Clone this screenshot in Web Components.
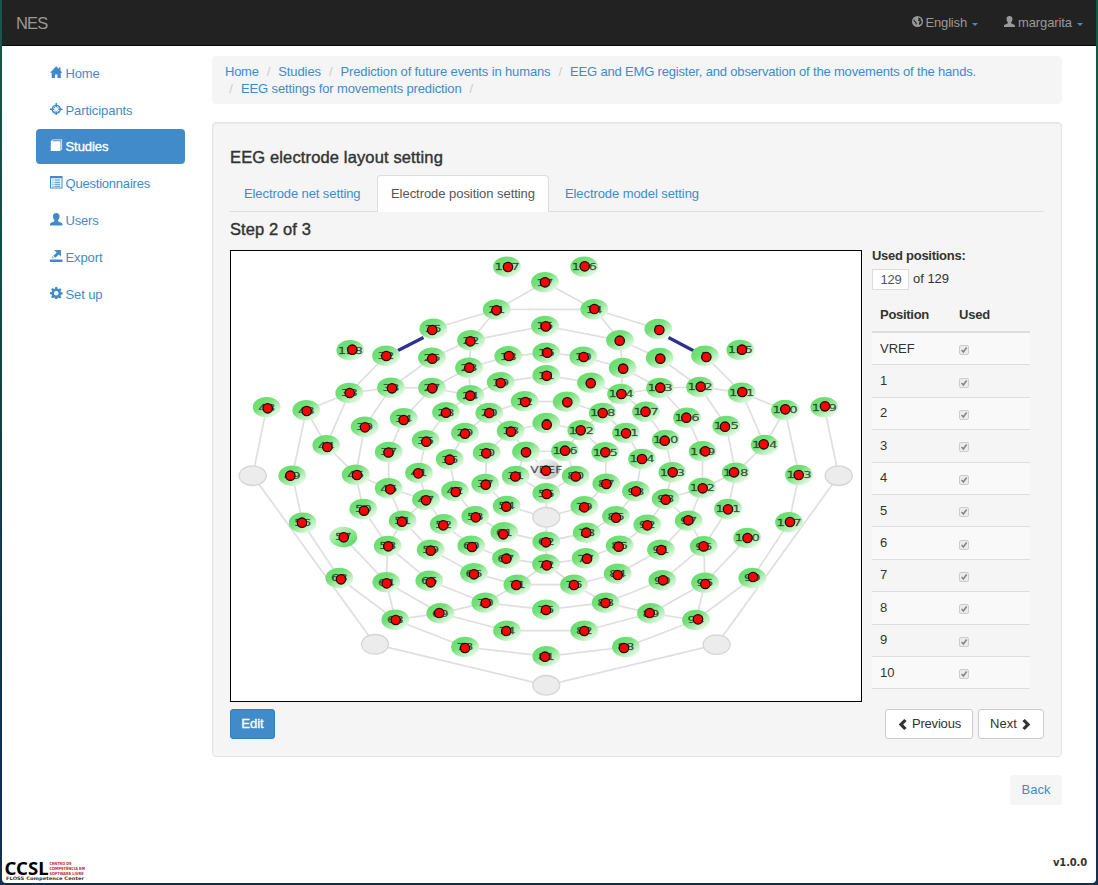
<!DOCTYPE html>
<html lang="en">
<head>
<meta charset="utf-8">
<title>NES</title>
<style>
html,body{margin:0;height:885px;overflow:hidden}
body{font:13px/18px "Liberation Sans",Arial,sans-serif;color:#333;background:linear-gradient(#0d5c46,#0f5544 150px,#123f46 450px,#102f4c 750px,#14304f)}
</style>
</head>
<body>
<nes-app></nes-app>
<script>
class Base extends HTMLElement{
  render(css,html){
    const root=this.attachShadow({mode:'open'});
    root.innerHTML=`<style>*{box-sizing:border-box}:host{display:block;box-sizing:border-box}a{color:#428bca;text-decoration:none}[data-w]{display:inline-block;white-space:nowrap}${css}</style>${html}`;
    root.querySelectorAll('[data-w]').forEach(Base.fit);
  }
  /* tracks a label so that it takes up its declared width */
  static fit(el){
    const r=document.createRange();r.selectNodeContents(el);
    const now=r.getBoundingClientRect().width;
    if(now)el.style.letterSpacing=((+el.dataset.w-now)/el.textContent.length).toFixed(3)+'px';
  }
}
const ICONS={
  home:'<path d="M8 .2 0 8.600h2.200V16h4.300v-5h3v5h4.300V8.600H16l-2.600-2.800V1.500h-2v2.200z"/>',
  screenshot:'<path fill-rule="evenodd" d="M7 0h2v2.100A6 6 0 0 1 13.900 7H16v2h-2.100A6 6 0 0 1 9 13.900V16H7v-2.100A6 6 0 0 1 2.100 9H0V7h2.100A6 6 0 0 1 7 2.100zM7 3.700A4.500 4.500 0 0 0 3.700 7H5.500V9H3.700A4.500 4.500 0 0 0 7 12.300V10.500H9v1.800A4.500 4.500 0 0 0 12.300 9H10.500V7h1.800A4.500 4.500 0 0 0 9 3.700V5.500H7z"/><path d="M4 4l2.500 2.500M12 4 9.500 6.500M4 12l2.500-2.500M12 12 9.500 9.500" stroke="currentColor" stroke-width="1.200"/>',
  book:'<path d="M1 3 3.500 .5H15.500V13.500L14.500 14.500V1.700H4L2.500 3H13.500V15.500H1z"/>',
  list:'<path fill-rule="evenodd" d="M0 0h16v16H0zM1.300 3v11.700h13.400V3z"/><path d="M3 4.500h1.500v1.300H3zm2.700 0H13v1.300H5.700zM3 7.200h1.500v1.300H3zm2.700 0H13v1.300H5.700zM3 9.900h1.500v1.300H3zm2.700 0H13v1.300H5.700zM3 12.400h1.500v1.200H3zm2.700 0H13v1.200H5.700z"/>',
  user:'<path d="M8 0c2.900 0 4.300 1.700 4.300 4.300 0 2-.8 3.700-1.900 4.700v1.700c0 .6 5.600 1.600 5.600 3.700V16H0v-1.600c0-2.100 5.600-3.100 5.600-3.700V9C4.500 8 3.700 6.300 3.700 4.300 3.700 1.700 5.100 0 8 0z"/>',
  export:'<path d="M0 12h16v4H0zM5 0h9v8.500l-2.700-2.600-4.500 4-2.500-2.600 4.300-4.100z"/><path d="M3 7l2.500 3-3 1z" opacity=".6"/>',
  cog:'<path fill-rule="evenodd" d="M6.800 0h2.400l.5 2.200 1.300.5 2-1.200 1.600 1.600-1.200 2 .5 1.300 2.200.5v2.400l-2.200.5-.5 1.300 1.200 2-1.600 1.600-2-1.200-1.300.5L9.200 16H6.800l-.5-2.200-1.300-.5-2 1.200-1.600-1.600 1.200-2-.5-1.300L0 9.200V6.800l2.200-.5.500-1.300-1.200-2L3.100 1.400l2 1.200 1.200-.5zM8 5a3 3 0 1 0 0 6 3 3 0 0 0 0-6z"/>',
  globe:'<path fill-rule="evenodd" d="M8 0a8 8 0 1 1 0 16A8 8 0 0 1 8 0zM10 2 8.500 3 10 4.500 8.500 6.500l3 1.500L10 10l.5 3c2.200-1 3.900-3 3.700-5.500L12.500 6l.5-2zM3 4.500 2 7l2.500 2.500L6 13l1.200-2L5.500 8 4 7z"/>',
  left:'<path d="M10.500 0 14 3 9 8l5 5-3.500 3-8-8z"/>',
  right:'<path d="M5.500 0 2 3l5 5-5 5 3.500 3 8-8z"/>'
};
customElements.define('nes-icon',class extends Base{
  connectedCallback(){this.render(`:host{display:inline-block;width:12px;height:12px;flex:none}svg{display:block;width:100%;height:100%;fill:currentColor}`,
  `<svg viewBox="0 0 16 16">${ICONS[this.getAttribute('name')]}</svg>`)}
});
customElements.define('nes-navbar',class extends Base{
  connectedCallback(){this.render(`:host{display:flex;align-items:center;height:46px;background:#222;border-bottom:1px solid #080808;color:#999;padding:0 13px 0 14px}
  .brand{font-size:16.500px;flex:1}.item{display:flex;align-items:center;margin-left:26px}nes-icon{width:11px;height:11px;margin:-2px 3px 0 0}
  i{border:3px solid transparent;border-top-color:#428bca;border-bottom:0;margin-left:5px;margin-top:3px}`,
  `<span class="brand"><span data-w="31.500">NES</span></span>
  <span class="item"><nes-icon name="globe"></nes-icon><span data-w="41.500">English</span><i></i></span>
  <span class="item"><nes-icon name="user"></nes-icon><span data-w="54">margarita</span><i></i></span>`)}
});
customElements.define('nes-sidebar',class extends Base{
  connectedCallback(){
    const items=[['home','Home',34],['screenshot','Participants',67],['book','Studies',43],['list','Questionnaires',84.500],['user','Users',33],['export','Export',37],['cog','Set up',37]];
    this.render(`:host{width:149px;padding-top:9.600px;flex:none}a{display:flex;align-items:center;height:34.800px;margin-bottom:2px;padding:1.500px 14px 0;border-radius:4px}nes-icon{margin:-3px 3px 0 0;width:12.500px;height:12.500px}.on{background:#428bca;color:#fff;-webkit-text-stroke:.35px #fff;padding-top:0}`,
    items.map((t,i)=>`<a class="${i==2?'on':''}"><nes-icon name="${t[0]}"></nes-icon><span data-w="${t[2]}">${t[1]}</span></a>`).join(''))}
});
customElements.define('nes-breadcrumb',class extends Base{
  connectedCallback(){this.render(`:host{height:48px;background:#f5f5f5;border-radius:4px;padding:7px 13px;line-height:17px}div{display:flex}i{font-style:normal;color:#ccc;width:19.500px;text-align:center}.second i:first-child{width:16px;padding-right:4px}`,
  `<div><a data-w="33.700">Home</a><i>/</i><a data-w="42.800">Studies</a><i>/</i><a data-w="210">Prediction of future events in humans</a><i>/</i><a data-w="406">EEG and EMG register, and observation of the movements of the hands.</a></div>
  <div class="second"><i>/</i><a data-w="220.500">EEG settings for movements prediction</a><i>/</i></div>`)}
});
customElements.define('nes-tabs',class extends Base{
  connectedCallback(){this.render(`:host{display:flex;height:37px;border-bottom:1px solid #ddd}a{height:37px;padding:9px 13px 0 13px;line-height:17px;border:1px solid transparent;border-bottom:0;margin-right:2px}.on{background:#fff;border-color:#ddd;border-radius:4px 4px 0 0;color:#555}`,
  `<a><span data-w="116.500">Electrode net setting</span></a><a class="on" style="margin-left:.5px"><span data-w="144">Electrode position setting</span></a><a><span data-w="134">Electrode model setting</span></a>`)}
});
/* id: ellipse x, ellipse y, marker x, marker y */
const NODES=`25 433.3 328.7 432.3 330;128 350.3 350.3 352.3 349.7;32 386 355.7 386.3 356;26 432 357.7 432.3 358.7;38 349.3 393 349.7 393;33 391 387.7 392 388.3;27 432 388 432.3 388.3;48 266.7 407.3 267.7 408.3;43 306.3 410.3 306.7 411;34 403.7 418.3 403.7 420;39 364.7 426.7 365 427.3;44 326.3 445.3 327.3 447;35 425.7 440.3 426.3 441.7;40 388.7 452 388.5 452.5;127 507 266.7 508 267;126 584.3 266.7 584.7 266.3;17 545 282.3 545 282.3;21 496.7 309.5 496.4 310.3;14 594.3 309.3 594.4 309;15 545 326 545.8 326.4;22 471 340.3 470.4 341.3;9 620 340.3 619.7 340.7;18 508.3 356.3 509 356;16 546.3 352.7 547.3 352.7;10 583.3 356.7 583.7 357;23 469 367.7 469.3 367.7;3 622.7 368 623.2 368.7;19 500.7 382.3 500.7 383;11 546.3 375.3 546.7 375.8;4 591 382.7 590.7 383.2;24 470.3 395.3 470.3 395.7;124 621 394 621.4 394;12 524.7 401.3 525.3 402;5 566.7 401.7 567.3 402.3;28 446 412.3 446 412.7;20 489.3 413 489.3 413;118 602.7 413 602.7 413;6 546.3 423 546.7 424.7;13 510.7 431 511 431.7;112 581.3 430.3 580.7 430.3;29 465 433 465 433.7;111 626 433 626 433.3;7 526 451.7 526 452.3;106 565 451 565 450.7;30 486.7 452.7 486.3 453.3;105 605.3 452.3 605.3 452.3;36 449.7 459.3 449.7 459.7;104 642 459 642 459;VREF 546.3 469.3 546 470.7;31 515.7 476 515.3 476.5;80 575.7 476 575.7 476.5;8 658.3 329 659.3 330;1 705 355.7 706.3 357;125 740.3 350 742 349.7;2 659.7 358 660.3 358.7;123 660 388 660.3 387.7;122 700 387 700.7 386.7;121 741.7 392.7 742.3 392;117 646 411.7 645.5 411.7;116 687 417.7 686.3 417.7;120 785 410 785.3 409.3;119 824.3 407.3 825 406.3;115 726.3 426 725 426.7;110 665.7 440 664.7 440.7;114 764.7 445 763.7 444.3;109 702.7 451.3 705.3 451.3;103 672.3 472.3 672.7 472.3;108 735.7 472.7 734 472.3;113 799 475 798.7 475;49 292.3 475.7 290.3 475.7;45 355.7 474.7 357 475;46 388.7 488.3 390.3 489.3;41 419 473 418.3 473.3;47 426 499.7 426 500.3;50 363.3 509 364 510.7;51 402.7 520.7 402 521.7;56 302.7 522.7 302 522.7;57 343.3 537 343.7 537.3;58 387.7 546 388.3 546.3;59 430.7 549.7 430.7 550.7;63 339.3 578 341 579.3;64 386.3 582.3 386.7 583.3;65 429.3 580.7 430.7 582.3;68 395.3 619.7 395.7 620;42 455 491 455.7 492;37 485.3 484 485.7 484.7;87 606.3 483.7 606.3 484;93 636 491.3 636 491.3;55 546.3 493.3 546.7 494;54 506.7 506 506.3 506.7;79 584.3 506.3 584.3 507.3;53 475.3 516.3 475.7 517.3;86 616 516.3 616 517.7;52 443.7 524.3 443.3 525.3;92 647.3 524.7 647.3 525.3;61 504.3 532.3 503.3 534.3;78 586.7 532.7 586.3 532.7;62 546.3 541.7 546 542.3;60 471.3 545.7 472 547;85 619.7 545.7 618.7 546.7;67 506 558.3 506.3 558.7;77 585.7 558.3 587 558.7;72 546 564.3 546.7 565.3;66 474 573.3 474 574.3;84 617.7 573.7 617.7 575;71 517.3 584.7 516.3 585;76 574 584.7 574 585;70 485.3 602.7 485.7 603;83 605.7 602.7 605.5 603;75 546 609.7 546 610;69 440.3 613.3 439.3 613;89 651 613.3 649.7 613;74 507 630.7 506.3 631;82 584.3 630.7 584.3 631;73 465 647 465 648;88 626 647 624 648;81 546.3 656.3 545 656.7;102 702.3 488 702.7 488.3;98 665.7 499 665.7 499.7;101 728 509 728 509.3;97 688.7 520.7 688.3 520.3;107 789 522.3 790 522;100 747.3 538 747.5 538;91 661 549.7 661.3 550;96 703.7 546.3 703.6 546.4;99 752.3 578 753 577;90 662.3 580.3 663 580.3;95 705 582.7 705.3 584;94 696 620 698 619.3`.split(';').map(s=>s.split(' ')).map(a=>[a[0],...a.slice(1).map(Number)]);
const REST={A:[252.7,475.7],B:[838.7,475.7],C:[375,644.3],D:[716.6,644.6],E:[546.3,685.3],F:[546.3,517.3]};
/* printed numbers that differ from the electrode's id */
const PRINTED={40:'37'};
const EDGES='17-21 17-14 21-14 21-25 14-8 21-22 14-9 22-15 15-9 22-23 9-3 22-26 9-2 23-18 18-16 16-10 10-3 23-24 3-124 24-19 19-11 11-4 4-124 23-27 3-123 24-27 124-123 24-28 24-20 124-118 32-38 1-121 26-33 2-122 33-38 33-27 123-122 122-121 38-43 121-120 38-44 121-114 43-44 120-114 43-49 120-113 48-A 119-B 33-39 122-115 27-34 123-116 39-45 115-108 44-45 114-108 34-40 116-109 40-46 109-102 28-35 117-110 124-117 35-41 110-103 41-47 103-98 45-46 108-102 46-47 102-98 20-12 12-5 5-118 20-13 118-112 13-6 6-112 13-7 112-106 7-106 20-29 118-111 29-36 111-104 13-30 112-105 30-37 105-87 7-31 106-80 7-VREF 31-55 80-55 36-42 104-93 37-54 87-79 54-F 79-F 55-F F-62 62-72 42-53 93-86 53-61 86-78 61-62 62-78 47-52 98-92 52-60 92-85 60-67 85-77 67-72 72-77 45-50 108-101 46-51 102-97 47-51 98-97 50-58 101-96 51-58 97-96 51-59 97-91 59-66 91-84 66-71 84-76 71-76 72-71 72-76 71-70 76-83 58-64 96-95 58-65 96-90 65-70 90-83 70-75 75-83 57-64 100-95 64-68 95-94 64-69 95-89 69-70 83-89 68-69 94-89 69-74 89-82 74-82 68-73 94-88 73-81 81-88 49-56 113-107 56-63 107-99 63-68 99-94 A-C B-D C-E D-E'.split(' ');
customElements.define('electrode-map',class extends Base{
  connectedCallback(){
    const at={...REST};NODES.forEach(n=>at[n[0]]=[n[1],n[2]]);
    const lines=EDGES.map(e=>{const[a,b]=e.split('-');return`<path d="M${at[a]}L${at[b]}"/>`}).join('');
    const pads=NODES.map(n=>`<ellipse cx="${n[1]}" cy="${n[2]}" rx="13.900" ry="10.200" fill="url(#${n[0]=='VREF'?'v':n[0]=='57'?'h':'g'})"/>`).join('');
    const rest=Object.values(REST).map(p=>`<ellipse cx="${p[0]}" cy="${p[1]}" rx="13.500" ry="9.800" fill="#ececec" stroke="#d6d6d6" stroke-width="1.300"/>`).join('');
    const texts=NODES.map(n=>`<text x="${n[1]}" y="${n[2]+3.2}" textLength="${n[0]=='VREF'?32:n[0].length*8.4}" lengthAdjust="spacingAndGlyphs">${PRINTED[n[0]]||n[0]}</text>`).join('');
    const dots=NODES.map(n=>`<circle cx="${n[3]}" cy="${n[4]}" r="4.700"/>`).join('');
    this.render(`:host{width:632px;height:452px;border:1px solid #000;background:#fff;flex:none}svg{display:block}text{font:9.500px "DejaVu Sans",sans-serif;text-anchor:middle;fill:#1d2f1d;fill-opacity:.8;stroke:#1d2f1d;stroke-opacity:.45;stroke-width:.35px}.l{stroke:#dfdfdf;stroke-width:1.700;fill:none}.d{fill:#f00;stroke:#1c0a0a;stroke-width:1.300}.p{filter:blur(.4px)}`,
    `<svg width="630" height="450" viewBox="231 251 630 450"><defs>
    <linearGradient id="g" x1=".12" y1=".2" x2=".85" y2=".95"><stop offset="0" stop-color="#6ade70"/><stop offset=".3" stop-color="#74e07a"/><stop offset=".6" stop-color="#a9ecab"/><stop offset="1" stop-color="#f0fcf0"/></linearGradient>
    <linearGradient id="h" x1=".9" y1=".9" x2=".1" y2=".1"><stop offset="0" stop-color="#5bdb62"/><stop offset="1" stop-color="#c9f3ca"/></linearGradient>
    <linearGradient id="v" x1="0" y1="0" x2="1" y2="1"><stop offset="0" stop-color="#fff"/><stop offset="1" stop-color="#b9b9b9"/></linearGradient></defs>
    <g class="l">${lines}</g><path d="M398 350.500 423.500 337.500M668.500 337.500 694 351" stroke="#2e3191" stroke-width="3.200"/><g class="p">${pads}</g>${rest}<g>${texts}</g><g class="d">${dots}</g></svg>`)}
});
customElements.define('position-table',class extends Base{
  connectedCallback(){
    const rows=['VREF',1,2,3,4,5,6,7,8,9,10].map(r=>`<div class="row"><span>${r}</span><b class="c"><svg viewBox="0 0 10 10"><path d="M2 5 4.200 7.400 8.300 2" fill="none" stroke="#858585" stroke-width="2"/></svg></b></div>`).join('');
    this.render(`:host{width:158px}.t{font-weight:bold;height:14px;line-height:11px}.n{display:flex;height:27px;margin-top:5px}.in{width:37px;height:21px;border:1px solid #ddd;background:#fff;padding-left:7.500px;line-height:20px;color:#555;margin-right:4px}.of{line-height:19px}
    .head,.row{display:grid;grid-template-columns:79px 1fr;padding:0 8px;align-items:center}.head{font-weight:bold;height:37px;border-bottom:2px solid #ddd;padding-top:2px}.row{height:32.400px;border-bottom:1px solid #ddd}.row:nth-child(odd){background:#f9f9f9}.c{display:block;width:10px;height:10px;border:1px solid #ccc;border-radius:2px;background:#ececec;margin-top:3px}.c svg{display:block;width:8px;height:8px}`,
    `<div class="t"><span data-w="93.500">Used positions:</span></div><div class="n"><span class="in"><span data-w="21">129</span></span><span class="of"><span data-w="36">of 129</span></span></div>
    <div class="head"><span><span data-w="49">Position</span></span><span><span data-w="31">Used</span></span></div><div class="body">${rows}</div>`)}
});
customElements.define('nes-button',class extends Base{
  connectedCallback(){this.render(`:host{display:inline-flex;align-items:center;justify-content:center;gap:4px;height:30px;border:1px solid #ccc;border-radius:3px;background:#fff;color:#333;line-height:16px}:host([kind=primary]){background:#428bca;border-color:#357ebd;color:#fff;-webkit-text-stroke:.35px #fff}:host([kind=link]){background:#f5f5f5;border-color:#f5f5f5;color:#428bca}`,`<slot></slot>`)}
});
customElements.define('nes-panel',class extends Base{
  connectedCallback(){this.render(`:host{height:635px;margin-top:18px;background:#f5f5f5;border:1px solid #e3e3e3;border-radius:4px;padding:0 17px;box-shadow:inset 0 1px 1px rgba(0,0,0,.05)}h3{margin:0;font-size:16.500px;font-weight:normal;-webkit-text-stroke:.4px #333}.a{height:52px;padding-top:25px;line-height:18px}.b{height:38px;line-height:34px}.row{display:flex}.foot{display:flex;gap:5px;margin-top:7px}.foot nes-button:first-child{margin-right:auto;width:45px}.p{width:88px}.x{width:66px}nes-icon{width:11px;height:11px}position-table{margin-left:10px}`,
  `<h3 class="a"><span data-w="213">EEG electrode layout setting</span></h3><nes-tabs></nes-tabs><h3 class="b"><span data-w="81">Step 2 of 3</span></h3>
  <div class="row"><electrode-map></electrode-map><position-table></position-table></div>
  <div class="foot"><nes-button kind="primary">Edit</nes-button><nes-button class="p"><nes-icon name="left"></nes-icon><span data-w="49">Previous</span></nes-button><nes-button class="x"><span data-w="27">Next</span><nes-icon name="right"></nes-icon></nes-button></div>`)}
});
customElements.define('nes-footer',class extends Base{
  connectedCallback(){this.render(`:host{display:flex;justify-content:space-between;align-items:flex-start;height:30px;padding:0 9px 0 3px}.v{font:bold 10px/20px "DejaVu Sans",sans-serif}svg{display:block;overflow:visible}`,
  `<svg width="82" height="29" viewBox="0 0 82 29" font-family="DejaVu Sans, sans-serif"><text x="-.500" y="21.700" font-size="17" font-weight="bold" textLength="44" lengthAdjust="spacingAndGlyphs" font-family="Noto Sans, sans-serif">CCSL</text><g fill="#c02a36" font-size="4.200" font-weight="bold"><text x="44.500" y="12" textLength="22" lengthAdjust="spacingAndGlyphs">CENTRO DE</text><text x="44.500" y="17.200" textLength="35.500" lengthAdjust="spacingAndGlyphs">COMPETÊNCIA EM</text><text x="44.500" y="22.200" textLength="34" lengthAdjust="spacingAndGlyphs">SOFTWARE LIVRE</text></g><text x="1" y="27.300" font-size="4.600" fill="#333" font-weight="bold" textLength="78" lengthAdjust="spacingAndGlyphs">FLOSS Competence Center</text></svg>
  <span class="v"><span data-w="34">v1.0.0</span></span>`)}
});
customElements.define('nes-app',class extends Base{
  connectedCallback(){this.render(`:host{display:flex;flex-direction:column;width:1094px;height:883px;margin:0 2px 2px;background:#fff;border-radius:0 0 4px 4px}.cols{display:flex;flex:1;padding:0 34px}.main{width:850px;margin-left:27px;padding-top:10px;display:flex;flex-direction:column}.back{align-self:flex-end;margin-top:18px;width:52px}`,
  `<nes-navbar></nes-navbar><div class="cols"><nes-sidebar></nes-sidebar><div class="main"><nes-breadcrumb></nes-breadcrumb><nes-panel></nes-panel><nes-button kind="link" class="back"><span data-w="29">Back</span></nes-button></div></div><nes-footer></nes-footer>`)}
});
</script>
</body>
</html>
